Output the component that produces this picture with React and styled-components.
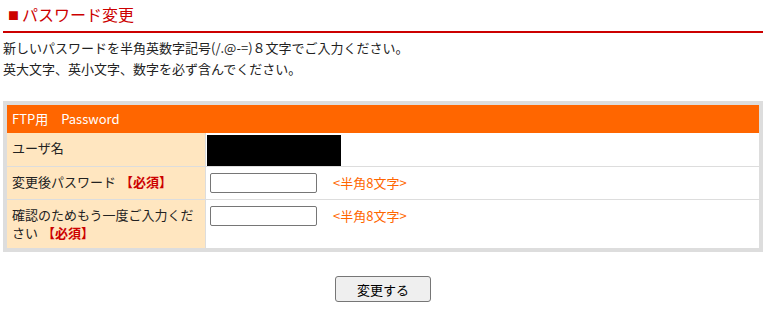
import React from 'react';
import styled, { createGlobalStyle } from 'styled-components';

const GlobalStyle = createGlobalStyle`
  body {
    margin: 0;
    background: #fff;
    font-family: "Noto Sans CJK JP", "Noto Sans", sans-serif;
    color: #222;
  }
`;

const Page = styled.div`
  width: 760px;
  margin-left: 3px;
  font-size: 13px;
`;

const Title = styled.h2`
  margin: 0;
  padding: 4px 0 6px 5px;
  font-size: 16px;
  line-height: 20px;
  font-weight: normal;
  color: #cc0000;
  border-bottom: 2px solid #cc0000;
`;

const Mark = styled.span`
  font-size: 11px;
  margin-right: 3px;
  vertical-align: 1px;
`;

const Intro = styled.p`
  margin: 4px 0 0;
  line-height: 21px;
`;

const Panel = styled.div`
  margin-top: 22px;
  border: 4px solid #dddddd;
  background: #fff;
`;

const Header = styled.div`
  height: 28px;
  line-height: 28px;
  padding-left: 5px;
  background: #ff6600;
  color: #fff;
`;

const Row = styled.div`
  display: flex;
  border-top: ${p => (p.first ? 'none' : '1px solid #dddddd')};
`;

const Label = styled.div`
  width: 188px;
  flex-shrink: 0;
  padding: 6px 5px;
  line-height: 18px;
  background: #ffe6c0;
  border-right: 1px solid #dddddd;
`;

const Required = styled.span`
  color: #cc0000;
  font-weight: bold;
  margin-left: 4px;
`;

const Value = styled.div`
  flex: 1;
  display: flex;
  align-items: flex-start;
  padding: ${p => (p.tight ? '2px 0 0 1px' : '6px 0 6px 4px')};
`;

const Masked = styled.div`
  width: 134px;
  height: 31px;
  background: #000;
`;

const Field = styled.input`
  box-sizing: border-box;
  width: 107px;
  height: 20px;
  margin: 0;
  padding: 1px 3px;
  border: 1px solid #767676;
  border-radius: 2px;
  font-size: 13px;
  background: #fff;
`;

const Hint = styled.span`
  margin-left: 16px;
  line-height: 20px;
  color: #ff6600;
`;

const Actions = styled.div`
  display: flex;
  justify-content: center;
  padding-top: 24px;
`;

const Button = styled.button`
  width: 96px;
  height: 26px;
  padding: 0;
  font-family: inherit;
  font-size: 13px;
  color: #000;
  background: #efefef;
  border: 1px solid #767676;
  border-radius: 3px;
`;

export default function App() {
  return (
    <>
      <GlobalStyle />
      <Page>
        <Title>
          <Mark>■</Mark>パスワード変更
        </Title>
        <Intro>
          新しいパスワードを半角英数字記号(/.@-=)８文字でご入力ください。
          <br />
          英大文字、英小文字、数字を必ず含んでください。
        </Intro>
        <Panel>
          <Header>FTP用　Password</Header>
          <Row first>
            <Label>ユーザ名</Label>
            <Value tight>
              <Masked />
            </Value>
          </Row>
          <Row>
            <Label>
              変更後パスワード<Required>【必須】</Required>
            </Label>
            <Value>
              <Field type="password" />
              <Hint>&lt;半角8文字&gt;</Hint>
            </Value>
          </Row>
          <Row>
            <Label>
              確認のためもう一度ご入力ください<Required>【必須】</Required>
            </Label>
            <Value>
              <Field type="password" />
              <Hint>&lt;半角8文字&gt;</Hint>
            </Value>
          </Row>
        </Panel>
        <Actions>
          <Button>変更する</Button>
        </Actions>
      </Page>
    </>
  );
}
